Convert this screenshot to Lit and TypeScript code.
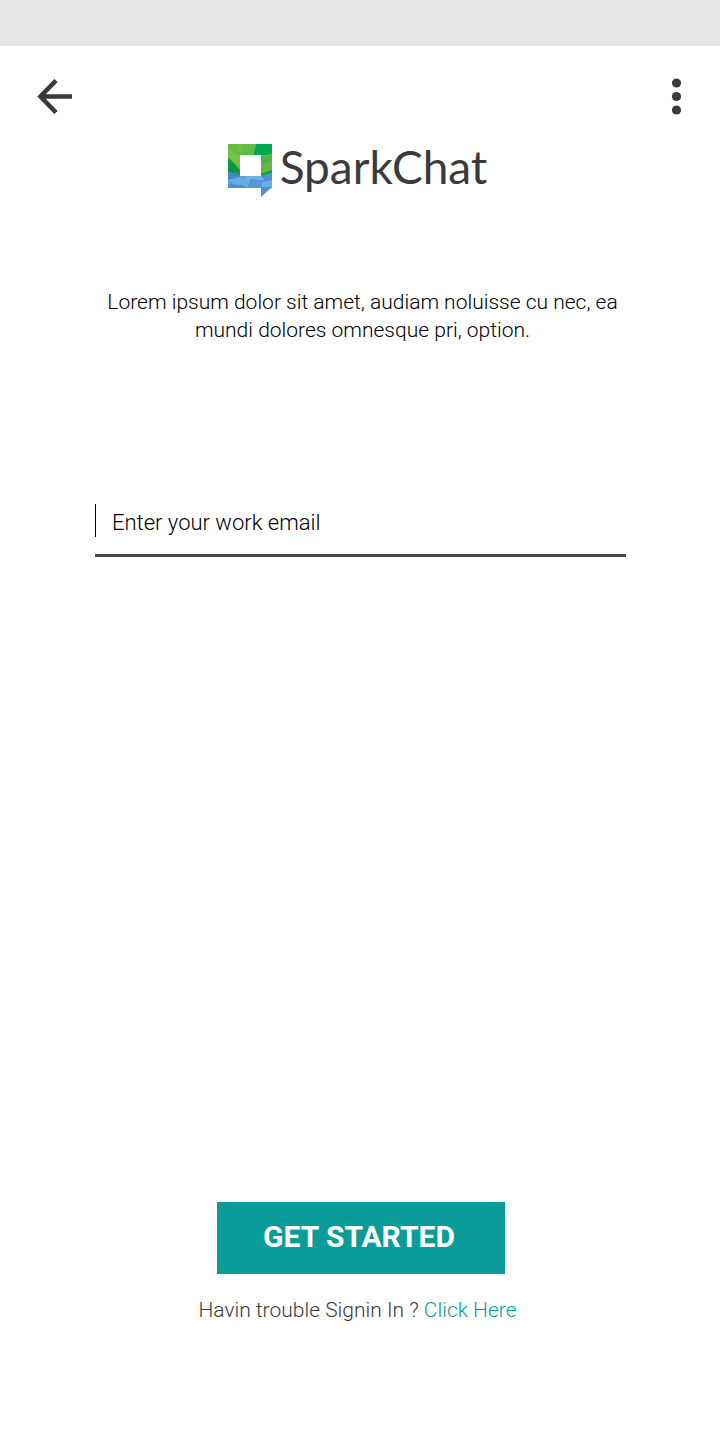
import { LitElement, html, css, svg } from "lit";
import { customElement, state } from "lit/decorators.js";

const facets: Array<[string, string]> = [
  ["0,0 28,0 25,12 12,12 12,28 0,28", "#6cbe45"],
  ["0,0 9,0 12,12 0,5", "#65b945"],
  ["0,5 12,12 12,20 4,18 0,14", "#74c247"],
  ["16,0 28,0 25,12 12,12", "#5fbb46"],
  ["0,14 4,17 12,26 12,31 0,29", "#0f9743"],
  ["28,0 44,0 44,11 25,12", "#00ab4f"],
  ["32,12 44,10 44,30 32,32", "#62b946"],
  ["32,12 44,10 44,16 32,22", "#52b348"],
  ["32,30 44,26 44,30 32,33", "#1b9a3e"],
  ["0,28 12,31 33,32 44,29 44,44 0,44", "#5aa2dc"],
  ["0,28 12,30 12,33 0,36", "#4088c9"],
  ["0,36 12,33 24,36 20,44 10,42", "#65ade2"],
  ["0,40 14,41 20,44 0,44", "#4a90d0"],
  ["18,32 33,32 38,38 22,44", "#6fb4e6"],
  ["22,35 44,37 30,44 20,44", "#5596d4"],
  ["33,32 44,29 44,36 38,38", "#4c93d2"],
  ["34,38 44,36 44,44 33,44", "#68aee2"],
  ["33,43 44,43 33,53", "#4b8fcf"],
];

@customElement("spark-logo")
export class SparkLogo extends LitElement {
  static styles = css`
    :host {
      display: flex;
      justify-content: center;
      gap: 8px;
      padding-right: 6px;
      color: #3b3b3d;
    }
    .mark {
      width: 44px;
      height: 53px;
      flex: none;
    }
    .name {
      font: 400 46px/46px Lato, sans-serif;
    }
  `;

  render() {
    return html`
      <svg class="mark" viewBox="0 0 44 53" aria-hidden="true">
        ${facets.map(([points, fill]) => svg`<polygon points=${points} fill=${fill} />`)}
        <rect x="12" y="11" width="21" height="21" fill="#fff" />
      </svg>
      <span class="name">SparkChat</span>
    `;
  }
}

@customElement("app-root")
export class AppRoot extends LitElement {
  static styles = css`
    :host {
      display: flex;
      flex-direction: column;
      min-height: 100vh;
      background: #fff;
      color: #000;
      font: 300 21px/28px Roboto, sans-serif;
    }
    .status {
      height: 46px;
      background: #e8e7e5;
    }
    .bar {
      display: flex;
      justify-content: space-between;
      padding: 28px 32px 0;
    }
    .icon {
      display: block;
      width: 44px;
      height: 44px;
      padding: 0;
      border: 0;
      background: none;
      color: #3b3a3b;
      cursor: pointer;
    }
    .icon.more {
      width: 24px;
    }
    .icon svg {
      display: block;
      width: 100%;
      height: 100%;
    }
    main {
      display: flex;
      flex: 1;
      flex-direction: column;
      padding: 26px 94px 116px 95px;
    }
    .intro {
      margin: 91px 0 0;
      padding-left: 4px;
      text-align: center;
    }
    .field {
      display: flex;
      align-items: center;
      gap: 16px;
      margin-top: 160px;
      padding-bottom: 17px;
      border-bottom: 3px solid #48474a;
    }
    .caret {
      width: 1px;
      height: 33px;
      background: #000;
    }
    .email {
      flex: 1;
      min-width: 0;
      height: 33px;
      padding: 4px 0 0;
      box-sizing: border-box;
      border: 0;
      outline: 0;
      background: none;
      color: #000;
      font: inherit;
      font-size: 22px;
    }
    .email::placeholder {
      color: #000;
      opacity: 1;
    }
    .actions {
      display: flex;
      flex-direction: column;
      align-items: center;
      margin-top: auto;
    }
    .start {
      width: 288px;
      height: 72px;
      padding: 0 3px 3px 0;
      border: 0;
      background: #0a9c99;
      color: #fff;
      font: 700 30px/36px Roboto, sans-serif;
      cursor: pointer;
    }
    .help {
      margin: 22px 0 0;
      padding-right: 6px;
      color: #3b3a3b;
    }
    .help a {
      color: #0a9c99;
      text-decoration: none;
    }
  `;

  @state() private email = "";

  render() {
    return html`
      <div class="status"></div>
      <header class="bar">
        <button class="icon" aria-label="Back">
          <svg viewBox="0 0 44 44" fill="none" stroke="currentColor" stroke-width="4.6">
            <path d="M40 22.5H9M24 6.5l-15.5 16L24 38.5" />
          </svg>
        </button>
        <button class="icon more" aria-label="More options">
          <svg viewBox="0 0 24 44" fill="currentColor">
            <circle cx="12.5" cy="9" r="4.6" />
            <circle cx="12.5" cy="22.5" r="4.6" />
            <circle cx="12.5" cy="36" r="4.6" />
          </svg>
        </button>
      </header>
      <main>
        <spark-logo></spark-logo>
        <p class="intro">
          Lorem ipsum dolor sit amet, audiam noluisse cu nec, ea mundi dolores omnesque pri, option.
        </p>
        <div class="field">
          <span class="caret"></span>
          <input
            class="email"
            type="email"
            aria-label="Enter your work email"
            placeholder="Enter your work email"
            .value=${this.email}
            @input=${(e: Event) => (this.email = (e.target as HTMLInputElement).value)}
          />
        </div>
        <div class="actions">
          <button class="start">GET STARTED</button>
          <p class="help">Havin trouble Signin In ? <a href="#help">Click Here</a></p>
        </div>
      </main>
    `;
  }
}
